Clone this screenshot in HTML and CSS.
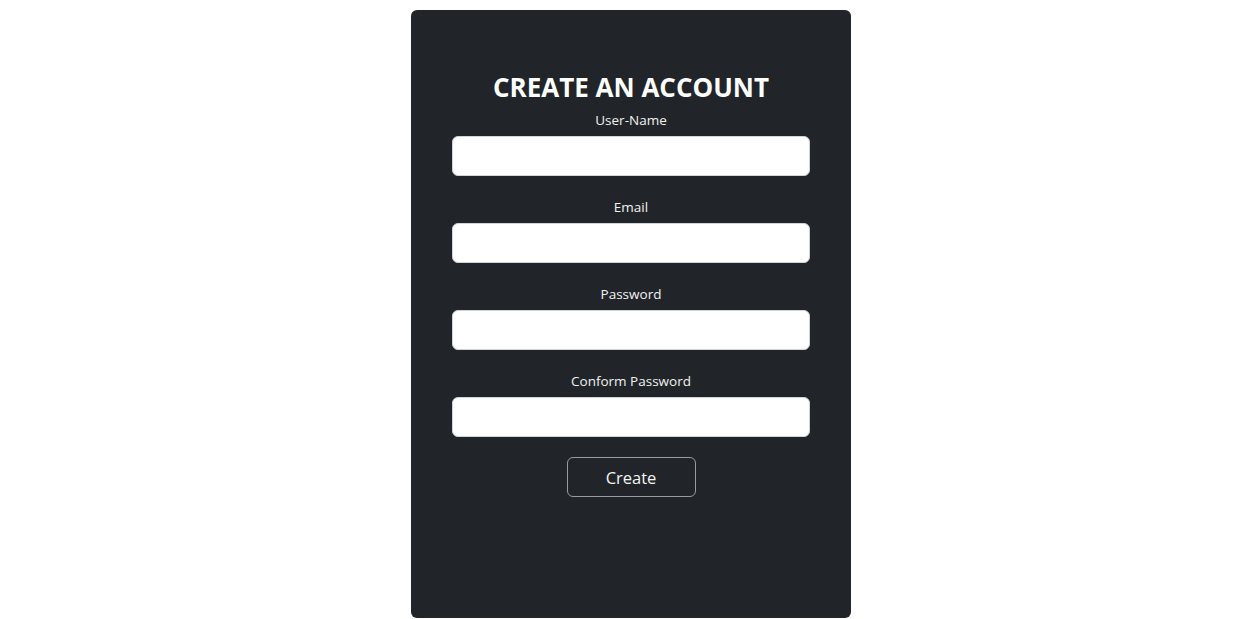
FILE: index.html
```html
<!DOCTYPE html>
<html lang="en">
<head>
<meta charset="utf-8">
<title>Create an account</title>
<link rel="stylesheet" href="styles.css">
</head>
<body>
<main class="page">
  <form class="card">
    <h1 class="title">CREATE AN ACCOUNT</h1>
    <div class="field">
      <label class="label" for="u">User-Name</label>
      <input class="input" id="u" type="text">
    </div>
    <div class="field">
      <label class="label" for="e">Email</label>
      <input class="input" id="e" type="email">
    </div>
    <div class="field">
      <label class="label" for="p">Password</label>
      <input class="input" id="p" type="password">
    </div>
    <div class="field">
      <label class="label" for="c">Conform Password</label>
      <input class="input" id="c" type="password">
    </div>
    <button class="btn" type="button">Create</button>
  </form>
</main>
</body>
</html>
```
FILE: styles.css
```css
* { box-sizing: border-box; }
html, body { margin: 0; padding: 0; background: #fff; }
body { font-family: "Open Sans", "Noto Sans", sans-serif; }
.page {
  display: flex;
  justify-content: center;
  padding-top: 10px;
  padding-left: 5px;
}
.card {
  width: 440px;
  height: 608px;
  background: #212529;
  border-radius: 6px;
  padding: 60px 41px 0;
  display: flex;
  flex-direction: column;
  align-items: center;
}
.title {
  margin: 0 0 7px;
  font-size: 26px;
  line-height: 34px;
  font-weight: 700;
  color: #fff;
  letter-spacing: 0;
}
.field {
  width: 100%;
  display: flex;
  flex-direction: column;
  align-items: center;
  margin-bottom: 22px;
}
.field:last-of-type { margin-bottom: 20px; }
.label {
  font-size: 13.5px;
  line-height: 19px;
  color: #f1f1f1;
  margin-bottom: 6px;
}
.input {
  width: 100%;
  height: 40px;
  border: 1px solid #ced4da;
  border-radius: 6px;
  background: #fff;
  padding: 6px 12px;
  font: inherit;
}
.btn {
  width: 129px;
  height: 40px;
  background: transparent;
  border: 1px solid #979ca1;
  border-radius: 6px;
  color: #f4f4f4;
  font-family: inherit;
  font-size: 16.5px;
}
```
